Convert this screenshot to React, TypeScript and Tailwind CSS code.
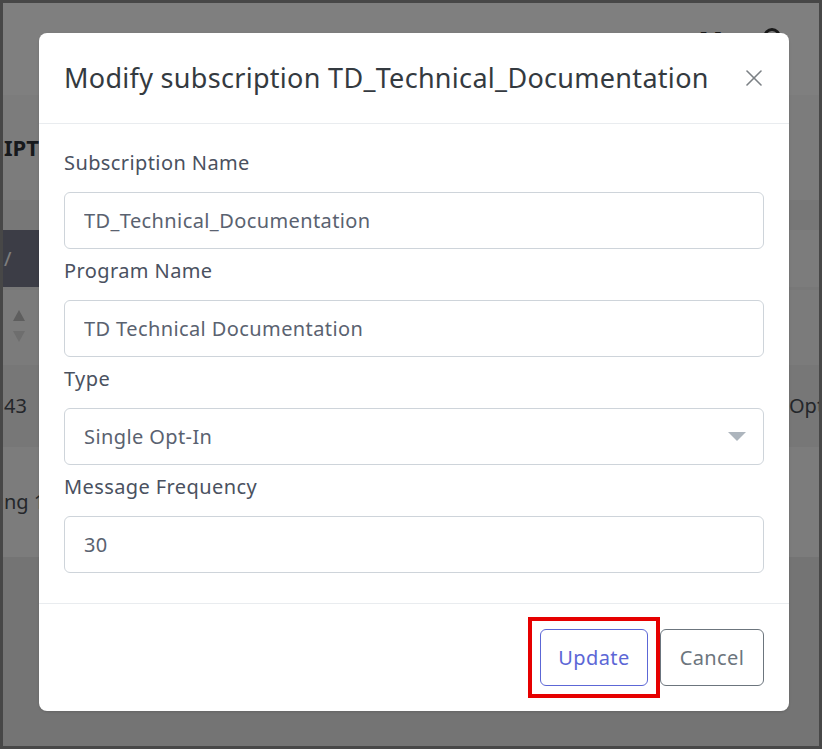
import React from "react";

const font = { fontFamily: '"Noto Sans", "Open Sans", sans-serif' };

interface FieldProps {
  label: string;
  children: React.ReactNode;
  last?: boolean;
}

const Field = ({ label, children, last }: FieldProps) => (
  <div className={last ? "" : "mb-[7px]"}>
    <label className="mb-[14px] block text-[20px] leading-[30px] tracking-[0.4px] text-[#4a5160]">{label}</label>
    {children}
  </div>
);

const TextInput = ({ value }: { value: string }) => (
  <input
    type="text"
    defaultValue={value}
    readOnly
    className="block h-[57px] w-full rounded-md border border-[#ced4da] bg-white px-[19px] text-[20px] tracking-[0.4px] text-[#5a6270] outline-none"
    style={font}
  />
);

const CloseIcon = () => (
  <svg width="16" height="16" viewBox="0 0 16 16" fill="none" stroke="#7b8085" strokeWidth="1.6" strokeLinecap="round">
    <line x1="1" y1="1" x2="15" y2="15" />
    <line x1="15" y1="1" x2="1" y2="15" />
  </svg>
);

const Caret = () => (
  <svg width="18" height="9" viewBox="0 0 18 9">
    <polygon points="0,0 18,0 9,9" fill="#adb5bd" />
  </svg>
);

const SortArrows = () => (
  <svg width="12" height="32" viewBox="0 0 12 32">
    <polygon points="6,0 12,11 0,11" fill="#bcbcbc" />
    <polygon points="0,21 12,21 6,32" fill="#dcdcdc" />
  </svg>
);

// the list page that sits behind the dialog
const PageBehind = () => (
  <div className="flex h-full flex-col bg-[#e8e8e8] text-[20px]" style={font}>
    <div className="flex h-[92px] items-start justify-end gap-[40px] bg-white pr-[38px] pt-[25px]">
      <span className="text-[26px] font-bold leading-none text-[#333]">M</span>
      <span className="h-[18px] w-[18px] rounded-full border-[3px] border-[#333]" />
    </div>
    <div className="flex h-[105px] items-center bg-[#f8f8f8] pl-[1px]">
      <span className="text-[22px] font-bold text-[#2e3339]">IPT</span>
    </div>
    <div className="h-[30px] bg-[#eeeeee]" />
    <div className="flex h-[57px] bg-[#f8f8f8]">
      <div className="flex w-[220px] items-center bg-[#797b8d] pl-[1px] text-white">
        <span>/</span>
      </div>
    </div>
    <div className="h-[78px] border-t-[3px] border-[#f0f0f0] bg-[#f6f6f6] pl-[10px] pt-[20px]">
      <SortArrows />
    </div>
    <div className="flex h-[82px] items-center justify-between bg-[#eeeeee] text-[#484d55]">
      <span className="pl-[1px]">43</span>
      <span className="w-[30px] overflow-hidden whitespace-nowrap">Opt</span>
    </div>
    <div className="flex h-[110px] items-center bg-[#f8f8f8] text-[#484d55]">
      <span className="pl-[1px]">ng 1</span>
    </div>
    <div className="flex-1" />
  </div>
);

export default function App() {
  return (
    <div className="relative h-[749px] w-[822px] overflow-hidden border-[3px] border-[#474747]">
      <PageBehind />
      <div className="absolute inset-0 bg-black/50" />

      <div
        className="absolute left-[36px] top-[30px] w-[750px] rounded-lg bg-white shadow-sm"
        style={font}
      >
        <div className="flex items-center justify-between border-b border-[#e9ecef] px-[25px] py-[25px]">
          <h2 className="text-[27px] leading-[40px] tracking-[0.3px] text-[#343a40]">
            Modify subscription TD_Technical_Documentation
          </h2>
          <button className="flex h-[20px] w-[20px] items-center justify-center">
            <CloseIcon />
          </button>
        </div>

        <div className="px-[25px] pb-[30px] pt-[24px]">
          <Field label="Subscription Name">
            <TextInput value="TD_Technical_Documentation" />
          </Field>
          <Field label="Program Name">
            <TextInput value="TD Technical Documentation" />
          </Field>
          <Field label="Type">
            <div className="flex h-[57px] w-full items-center justify-between rounded-md border border-[#ced4da] bg-white pl-[19px] pr-[17px] text-[20px] tracking-[0.4px] text-[#5a6270]">
              <span>Single Opt-In</span>
              <Caret />
            </div>
          </Field>
          <Field label="Message Frequency" last>
            <TextInput value="30" />
          </Field>
        </div>

        <div className="flex justify-end gap-[12px] border-t border-[#e9ecef] px-[25px] py-[25px]">
          <div className="relative">
            <button className="h-[57px] w-[108px] rounded-md border border-[#5c67d6] bg-white text-[20px] tracking-[0.4px] text-[#5c67d6]">
              Update
            </button>
            <div className="pointer-events-none absolute -inset-[12px] border-4 border-[#e60000]" />
          </div>
          <button className="h-[57px] w-[104px] rounded-md border border-[#6c757d] bg-white text-[20px] tracking-[0.4px] text-[#6c757d]">
            Cancel
          </button>
        </div>
      </div>
    </div>
  );
}
